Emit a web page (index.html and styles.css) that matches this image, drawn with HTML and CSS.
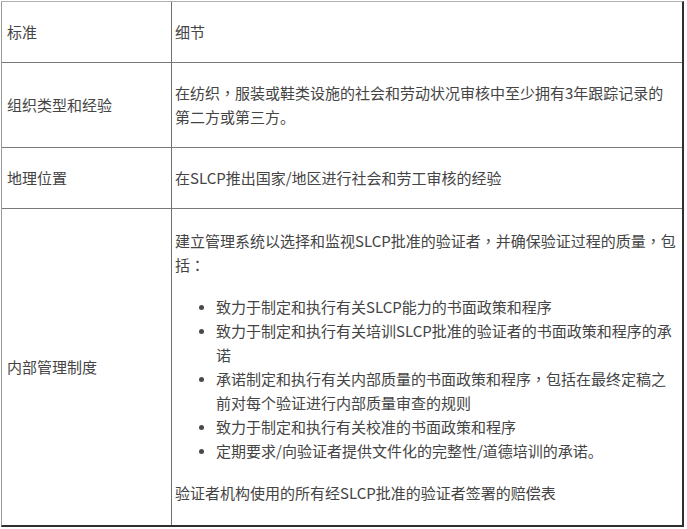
FILE: index.html
```html
<!DOCTYPE html>
<html lang="zh-CN">
<head>
<meta charset="utf-8">
<title>SLCP</title>
<link rel="stylesheet" href="styles.css">
</head>
<body>
<table class="spec">
  <colgroup>
    <col class="c1">
    <col class="c2">
  </colgroup>
  <tr class="r1">
    <td class="k">标准</td>
    <td class="v">细节</td>
  </tr>
  <tr class="r2">
    <td class="k">组织类型和经验</td>
    <td class="v">在纺织<span class="punc" lang="zh-TW">，</span>服装或鞋类设施的社会和劳动状况审核中至少拥有3年跟踪记录的<br>第二方或第三方。</td>
  </tr>
  <tr class="r3">
    <td class="k">地理位置</td>
    <td class="v">在SLCP推出国家/地区进行社会和劳工审核的经验</td>
  </tr>
  <tr class="r4 last">
    <td class="k">内部管理制度</td>
    <td class="v">
      <p class="para">建立管理系统以选择和监视SLCP批准的验证者<span class="punc" lang="zh-TW">，</span>并确保验证过程的质量<span class="punc" lang="zh-TW">，</span>包<br>括<span class="punc" lang="zh-TW">：</span></p>
      <ul class="items">
        <li>致力于制定和执行有关SLCP能力的书面政策和程序</li>
        <li>致力于制定和执行有关培训SLCP批准的验证者的书面政策和程序的承<br>诺</li>
        <li>承诺制定和执行有关内部质量的书面政策和程序<span class="punc" lang="zh-TW">，</span>包括在最终定稿之<br>前对每个验证进行内部质量审查的规则</li>
        <li>致力于制定和执行有关校准的书面政策和程序</li>
        <li>定期要求/向验证者提供文件化的完整性/道德培训的承诺。</li>
      </ul>
      <p class="para">验证者机构使用的所有经SLCP批准的验证者签署的赔偿表</p>
    </td>
  </tr>
</table>
</body>
</html>
```

FILE: styles.css
```css
html, body {
  background: #ffffff;
}
body {
  margin: 1px 0 0 1px;
  font-family: "Noto Sans CJK SC", "Microsoft YaHei", sans-serif;
  font-size: 15px;
  line-height: 24px;
  color: #444444;
}
.punc {
  font-family: "Noto Sans CJK TC", "Noto Sans CJK SC", sans-serif;
}
.spec {
  width: 682px;
  table-layout: fixed;
  border-collapse: separate;
  border-spacing: 0;
  border-left: 1px solid #9a9a9a;
  border-top: 1px solid #b0b0b0;
  border-right: 2px solid #2e2e2e;
  border-bottom: 2px solid #2e2e2e;
}
.c1 { width: 170px; }
.c2 { width: 510px; }
.spec td {
  vertical-align: middle;
  border-bottom: 1px solid #7a7a7a;
  padding: 0;
}
.spec .last td {
  border-bottom: 0;
}
.spec td.k {
  border-right: 1px solid #6e6e6e;
  padding-left: 5px;
}
.spec td.v {
  padding-left: 3px;
  padding-right: 2px;
}
.r1 td { height: 60px; }
.r2 td { height: 84px; }
.r3 td { height: 60px; }
.r4 td { height: 316px; }
.para {
  margin: 0;
}
.items {
  margin: 18px 0;
  padding-left: 41px;
}
.items li {
  margin: 0;
}
.items li::marker {
  font-size: 13px;
  color: #4a4a4a;
}
```
